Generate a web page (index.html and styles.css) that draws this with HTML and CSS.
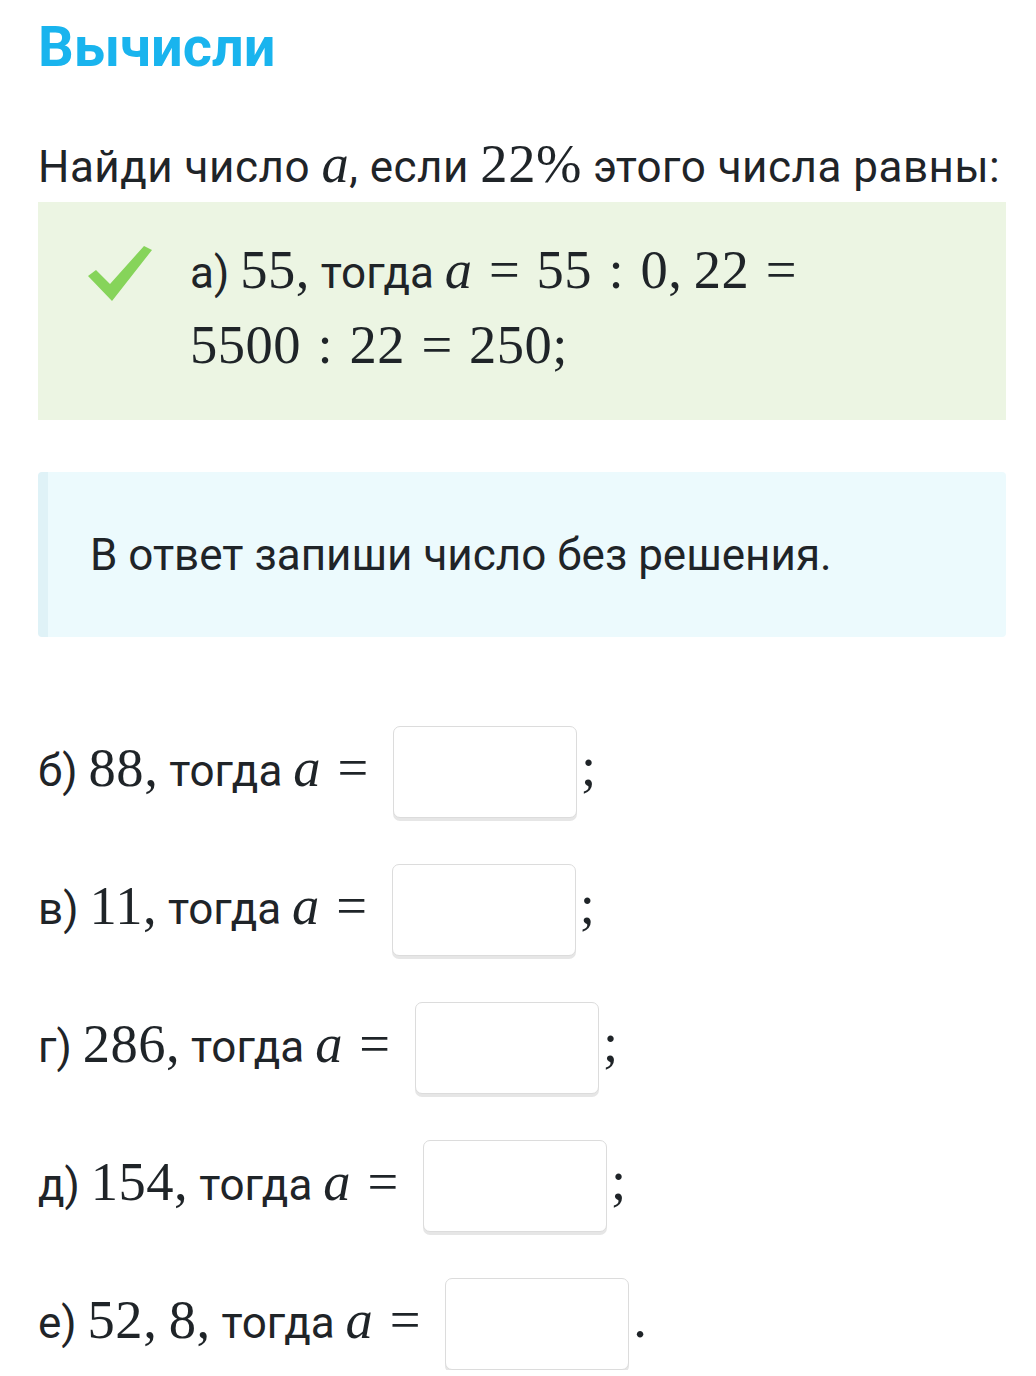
FILE: index.html
```html
<!DOCTYPE html>
<html lang="ru">
<head>
<meta charset="utf-8">
<link rel="stylesheet" href="styles.css">
</head>
<body>
<main class="page">
  <h1 class="title">Вычисли</h1>
  <p class="task">Найди число <span class="m"><i>a</i></span>, если <span class="m">22%</span> этого числа равны:</p>

  <div class="solved">
    <svg class="check" viewBox="0 0 64 58" width="64" height="58">
      <path d="M0 32 L8 26 L22 40 L56 2 L64 6 L24 57 Z" fill="#86d45a"/>
    </svg>
    <div class="solved-text">
      <div class="line">а) <span class="m">55,</span> тогда <span class="m"><i>a</i><span class="op">=</span>55<span class="op">:</span>0,&thinsp;22<span class="op">=</span></span></div>
      <div class="line"><span class="m">5500<span class="op">:</span>22<span class="op">=</span>250;</span></div>
    </div>
  </div>

  <div class="note">В ответ запиши число без решения.</div>

  <div class="rows">
    <div class="row"><span class="label">б) <span class="m">88,</span> тогда <span class="m"><i>a</i><span class="op">=</span></span></span><span class="box"></span><span class="m punct">;</span></div>
    <div class="row"><span class="label">в) <span class="m">11,</span> тогда <span class="m"><i>a</i><span class="op">=</span></span></span><span class="box"></span><span class="m punct">;</span></div>
    <div class="row"><span class="label">г) <span class="m">286,</span> тогда <span class="m"><i>a</i><span class="op">=</span></span></span><span class="box"></span><span class="m punct">;</span></div>
    <div class="row"><span class="label">д) <span class="m">154,</span> тогда <span class="m"><i>a</i><span class="op">=</span></span></span><span class="box"></span><span class="m punct">;</span></div>
    <div class="row"><span class="label">е) <span class="m">52,&thinsp;8,</span> тогда <span class="m"><i>a</i><span class="op">=</span></span></span><span class="box"></span><span class="m punct">.</span></div>
  </div>
</main>
</body>
</html>
```

FILE: styles.css
```css
* { box-sizing: border-box; }
html, body { margin: 0; padding: 0; background: #ffffff; }
body {
  font-family: Roboto, "Noto Sans", "Liberation Sans", sans-serif;
  color: #1f2428;
}
.page {
  padding: 14px 30px 0 38px;
}
.title {
  margin: 0;
  font-family: Roboto, "Noto Sans", sans-serif;
  font-weight: 700;
  font-size: 56px;
  line-height: 66px;
  color: #19b4ee;
}
.task {
  margin: 52px 0 0 0;
  font-size: 44px;
  line-height: 64px;
  white-space: nowrap;
  letter-spacing: 0.5px;
}
.m {
  font-family: "Liberation Serif", "DejaVu Serif", serif;
  font-size: 1.24em;
  letter-spacing: 0.5px;
}
.m i { font-style: italic; }
.op { padding: 0 0.3em; }
.solved {
  margin-top: 3px;
  background: #ecf5e3;
  display: flex;
  align-items: flex-start;
  padding: 32px 20px 0 50px;
  gap: 38px;
  height: 218px;
}
.check { margin-top: 10px; flex: none; }
.solved-text {
  font-size: 44px;
  line-height: 72px;
}
.note {
  margin-top: 52px;
  background: #ecfafd;
  border-left: 10px solid #dff2f7;
  border-radius: 4px;
  height: 165px;
  display: flex;
  align-items: center;
  padding-left: 42px;
  font-size: 44px;
}
.rows {
  margin-top: 89px;
  display: flex;
  flex-direction: column;
  gap: 46px;
}
.row {
  display: flex;
  align-items: center;
  height: 92px;
  font-size: 44px;
  white-space: nowrap;
}
.label { white-space: pre; line-height: 1; margin-top: -8px; }
.box {
  display: inline-block;
  flex: none;
  width: 184px;
  height: 92px;
  border: 1.5px solid #dcdcdc;
  border-radius: 7px;
  box-shadow: 0 3px 0 #e6e6e6;
  background: #fff;
  margin-left: 8px;
}
.punct { margin-left: 4px; line-height: 1; margin-top: -10px; }
```
